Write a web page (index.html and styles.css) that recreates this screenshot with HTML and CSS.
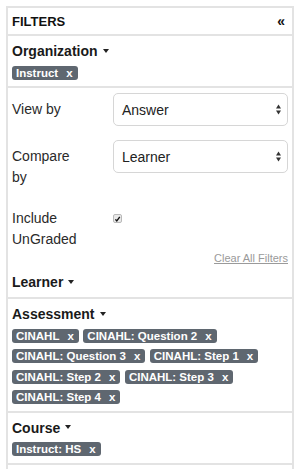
FILE: index.html
```html
<!DOCTYPE html>
<html lang="en">
<head>
<meta charset="utf-8">
<title>Filters</title>
<link rel="stylesheet" href="styles.css">
</head>
<body>
<div class="panel">
  <div class="panel-header">
    <span class="header-title">FILTERS</span>
    <span class="collapse">«</span>
  </div>

  <section class="filter-section">
    <div class="section-title">Organization<span class="caret"></span></div>
    <div class="tags">
      <span class="tag">Instruct<span class="tag-x">x</span></span>
    </div>
  </section>

  <section class="options">
    <div class="opt-row">
      <div class="opt-label">View by</div>
      <div class="select">
        <span>Answer</span>
        <svg class="updown" width="5" height="11" viewBox="0 0 5 11"><path d="M2.5 0.5 L5 4.5 L0 4.5 Z M0 6.5 L5 6.5 L2.5 10.5 Z" fill="#333"/></svg>
      </div>
    </div>
    <div class="opt-row">
      <div class="opt-label">Compare by</div>
      <div class="select">
        <span>Learner</span>
        <svg class="updown" width="5" height="11" viewBox="0 0 5 11"><path d="M2.5 0.5 L5 4.5 L0 4.5 Z M0 6.5 L5 6.5 L2.5 10.5 Z" fill="#333"/></svg>
      </div>
    </div>
    <div class="check-row">
      <div class="opt-label plain">Include UnGraded</div>
      <span class="checkbox"><svg width="8" height="8" viewBox="0 0 8 8"><path d="M1.6 4.4 L3.2 6.2 L6.6 1.6" fill="none" stroke="#111" stroke-width="1.6"/></svg></span>
    </div>
    <div class="clear-row"><a class="clear-link" href="#">Clear All Filters</a></div>
    <div class="section-title learner">Learner<span class="caret"></span></div>
  </section>

  <section class="filter-section">
    <div class="section-title">Assessment<span class="caret"></span></div>
    <div class="tags">
      <span class="tag">CINAHL<span class="tag-x">x</span></span>
      <span class="tag">CINAHL: Question 2<span class="tag-x">x</span></span>
      <span class="tag">CINAHL: Question 3<span class="tag-x">x</span></span>
      <span class="tag">CINAHL: Step 1<span class="tag-x">x</span></span>
      <span class="tag">CINAHL: Step 2<span class="tag-x">x</span></span>
      <span class="tag">CINAHL: Step 3<span class="tag-x">x</span></span>
      <span class="tag">CINAHL: Step 4<span class="tag-x">x</span></span>
    </div>
  </section>

  <section class="filter-section">
    <div class="section-title">Course<span class="caret"></span></div>
    <div class="tags">
      <span class="tag">Instruct: HS<span class="tag-x">x</span></span>
    </div>
  </section>
</div>
</body>
</html>
```

FILE: styles.css
```css
* { box-sizing: border-box; }

html, body { height: 100%; }

body {
  margin: 0;
  padding: 6px 6px 0;
  font-family: "Liberation Sans", Arial, Helvetica, sans-serif;
  color: #222;
  background: #fff;
  overflow: hidden;
}

.panel {
  height: 100%;
  border: 2px solid #e3e3e3;
  border-bottom: none;
}

.panel-header {
  height: 28px;
  display: flex;
  align-items: center;
  justify-content: space-between;
  padding: 0 7px 0 4px;
  border-bottom: 2px solid #e3e3e3;
}

.header-title {
  font-size: 13px;
  font-weight: bold;
  color: #111;
}

.collapse {
  font-size: 14px;
  font-weight: bold;
  color: #111;
}

.filter-section {
  padding: 5px 4px 6.5px;
  border-bottom: 2px solid #e3e3e3;
}

.section-title {
  font-size: 14px;
  font-weight: bold;
  line-height: 20px;
  color: #1a1a1a;
}

.caret {
  display: inline-block;
  margin-left: 5px;
  vertical-align: 0.25em;
  border-top: 4px solid #222;
  border-left: 3.5px solid transparent;
  border-right: 3.5px solid transparent;
}

.tags {
  display: flex;
  flex-wrap: wrap;
  gap: 6.5px 4.5px;
  margin-top: 4.5px;
}

.tag {
  display: inline-flex;
  align-items: center;
  height: 14px;
  padding: 0 5px 0 4px;
  border-radius: 3px;
  background: #5f6770;
  color: #fff;
  font-size: 11.5px;
  font-weight: bold;
  white-space: nowrap;
}

.tag-x {
  margin-left: 8px;
}

.options {
  padding: 5px 4px 5px;
  border-bottom: 2px solid #e3e3e3;
}

.opt-row {
  display: flex;
  align-items: flex-start;
}

.opt-row + .opt-row {
  margin-top: 14px;
}

.opt-label {
  flex: 0 0 101px;
  padding: 6px 28px 0 0;
  font-size: 14px;
  line-height: 21px;
  color: #2a2a2a;
}

.opt-label.plain {
  padding-top: 0;
}

.select {
  flex: 1;
  height: 33px;
  display: flex;
  align-items: center;
  justify-content: space-between;
  padding: 0 6px 0 8px;
  border: 1px solid #d6d6d6;
  border-radius: 5px;
  background: #fff;
  font-size: 14px;
  color: #222;
}

.updown {
  display: block;
}

.check-row {
  display: flex;
  align-items: flex-start;
  margin-top: 20px;
}

.checkbox {
  margin-top: 6px;
  width: 9px;
  height: 9px;
  border: 1px solid #b9b9b9;
  border-radius: 2px;
  background: #e9e9e9;
  display: flex;
  align-items: center;
  justify-content: center;
}

.checkbox svg {
  display: block;
}

.clear-row {
  display: flex;
  justify-content: flex-end;
  line-height: 16px;
}

.clear-link {
  font-size: 11px;
  color: #9a9a9a;
  text-decoration: underline;
}

.section-title.learner {
  margin-top: 6px;
}
```
